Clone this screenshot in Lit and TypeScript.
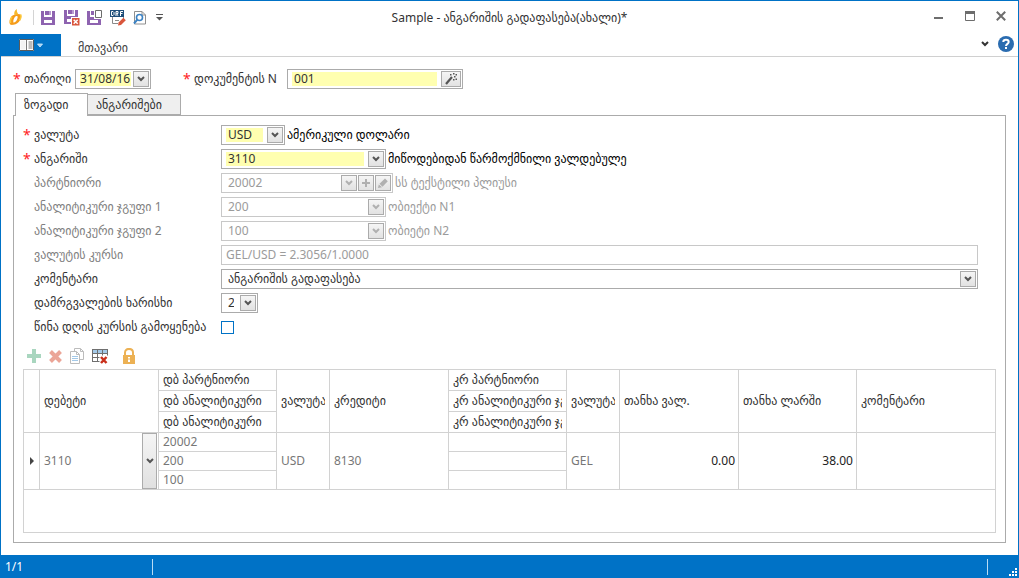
import { LitElement, html, css, svg, nothing } from "lit";
import { customElement, property } from "lit/decorators.js";

const chevron = html`<svg class="chev" width="8" height="6" viewBox="0 0 8 6" aria-hidden="true">
  <path d="M1 1l3 3 3-3" fill="none" stroke="currentColor" stroke-width="2" />
</svg>`;

const floppyBody = svg`<path d="M0 0h3v6h8V0h3v14H0z" fill="#8e63b0"/><path d="M4 0h4v4H4z" fill="#8e63b0"/><path d="M8 0h2v4H8z" fill="#b99bd0"/><path d="M3 9h8v3H3z" fill="#fff"/>`;

const icons = {
  logo: html`<svg width="14" height="17" viewBox="0 0 14 17" aria-hidden="true">
    <path d="M3.500 6.500C1.500 8 .3 11 .5 13.500.7 15.800 2 16.200 4.500 15.800 7.500 15.300 9.500 14 11 11.300 12.300 9 12.500 6.800 11.500 5.500 10 4.500 5.500 5 3.500 6.500z" fill="#f59c1a"/>
    <path d="M6.300 7.500C5 9 4 11.500 4.300 13.200 5.200 14 7 12.500 7.800 11 8.600 9.400 8.900 7.800 8.400 7.200 7.800 6.800 6.900 6.900 6.300 7.500z" fill="#fff"/>
    <path d="M3 7.500c-1.500 2-1.800 4.500-1.500 6.500M11.500 5.500c1 1.500.3 4-1 6" fill="none" stroke="#fcc83c" stroke-width="1.500"/>
    <path d="M5.500 6C4.800 3.500 5.500 1.500 7.800 0 7.800 2 8 3.500 9.500 5.500z" fill="#f7b92c"/>
  </svg>`,
  save: html`<svg width="14" height="14" viewBox="0 0 14 14" aria-hidden="true">${floppyBody}</svg>`,
  saveClose: html`<svg width="16" height="16" viewBox="0 0 16 16" aria-hidden="true">
    ${floppyBody}<path d="M7 7h9v9H7z" fill="#fff"/><path d="M8 8h7.500v7.500H8z" fill="#d9563c"/>
    <path d="M9.700 9.700l4 4m0-4l-4 4" stroke="#fff" stroke-width="1.500"/></svg>`,
  saveNew: html`<svg width="16" height="15" viewBox="0 0 16 15" aria-hidden="true">
    <path d="M0 1h3v6h4v2h7v6H0z" fill="#8e63b0"/><path d="M4 1h3v4H4z" fill="#8e63b0"/><path d="M3 10h8v3H3z" fill="#fff"/>
    <path d="M8.500.5h6v7h-6z" fill="#fff" stroke="#6d6d6d"/></svg>`,
  draft: html`<svg width="16" height="16" viewBox="0 0 16 16" aria-hidden="true">
    <path d="M2.500 7v6.500H8M13.500 7v2" fill="none" stroke="#8a8a8a"/>
    <path d="M5 10.500h4" stroke="#8a8a8a"/>
    <path d="M0 0h14v7H0z" fill="#1f4e79"/>
    <path d="M1.500 1.500v4M1.500 1.500h1.500l1 1v2l-1 1H1.500M6 6V1.500h2v2H6.500L8 5.800M10.500 6V1.500h2.500M10.500 3.500h2" fill="none" stroke="#fff"/>
    <path d="M8 15.500l.6-3L13.400 7.800l2.400 2.400L11 15z" fill="#d9563c"/></svg>`,
  preview: html`<svg width="14" height="16" viewBox="0 0 14 16" aria-hidden="true">
    <path d="M1.500 1.500h7.500l3.500 3.500v9h-11z" fill="#fff" stroke="#8f8f8f"/><path d="M9 1.500V5h3.500" fill="none" stroke="#8f8f8f"/>
    <circle cx="6.500" cy="7.500" r="3" fill="#fff" stroke="#3b82c4" stroke-width="1.600"/>
    <path d="M4.300 9.700L1 13.500" stroke="#3b82c4" stroke-width="2"/></svg>`,
  customize: html`<svg width="7" height="7" viewBox="0 0 7 7" aria-hidden="true">
    <path d="M0 .5h7" stroke="#555"/><path d="M0 3h7L3.500 6.500z" fill="#555"/></svg>`,
  menu: html`<svg width="24" height="12" viewBox="0 0 24 12" aria-hidden="true">
    <path d="M0 0h15v12H0z" fill="#fff"/><path d="M1.500 1.500h5v9h-5z" fill="#f3f3f3"/><path d="M7 0h1v12H7z" fill="#7b7b7b"/>
    <path d="M9.500 3h4M9.500 5h4M9.500 7h4M9.500 9h4" stroke="#777"/><path d="M.5.5h14v11H.5z" fill="none" stroke="#5b5b5b"/>
    <path d="M18.500 5h5L21 8z" fill="#9fd0f5" stroke="#d5ecfc" stroke-width=".8"/></svg>`,
  minimize: html`<svg width="10" height="12" viewBox="0 0 10 12" aria-hidden="true"><path d="M0 8h9" stroke="#6d6d6d" stroke-width="2"/></svg>`,
  maximize: html`<svg width="10" height="10" viewBox="0 0 10 10" aria-hidden="true"><path d="M.5.5h9v9h-9z" fill="none" stroke="#6d6d6d"/><path d="M0 0h10v3H0z" fill="#6d6d6d"/></svg>`,
  close: html`<svg width="10" height="10" viewBox="0 0 10 10" aria-hidden="true"><path d="M.8.8l8.400 8.400m0-8.400L.8 9.200" stroke="#6d6d6d" stroke-width="2"/></svg>`,
  help: html`<svg width="16" height="16" viewBox="0 0 16 16" aria-hidden="true">
    <circle cx="8" cy="8" r="8" fill="#2a6cb0"/>
    <path d="M5.300 6C5.300 3 10.700 3 10.700 6 10.700 7.800 8 7.900 8 10" fill="none" stroke="#fff" stroke-width="2"/><path d="M7 11h2v2H7z" fill="#fff"/></svg>`,
  wand: html`<svg width="12" height="12" viewBox="0 0 12 12" aria-hidden="true">
    <path d="M1 11l6-7" stroke="#555" stroke-width="2.200"/>
    <path d="M5 1h1.500v1.500H5zM8 0h1.500v1.500H8zM9 3h1.500v1.500H9zM8 6h1.500v1.500H8zM10.500 5.500H12V7h-1.500zM10.500 1H12v1.500h-1.500z" fill="#555"/></svg>`,
  smallPlus: html`<svg width="8" height="8" viewBox="0 0 8 8" aria-hidden="true"><path d="M0 4h8M4 0v8" stroke="#b0b0b0" stroke-width="2"/></svg>`,
  pencil: html`<svg width="10" height="10" viewBox="0 0 10 10" aria-hidden="true"><path d="M0 10l.8-3.500L4 9.300zM1.500 5.800L7 .5 9.800 3.200 4.500 8.700z" fill="#b0b0b0"/></svg>`,
  add: html`<svg width="14" height="14" viewBox="0 0 14 14" aria-hidden="true"><path d="M5 0h4v5h5v4H9v5H5V9H0V5h5z" fill="#a9d6bf"/></svg>`,
  remove: html`<svg width="13" height="13" viewBox="0 0 13 13" aria-hidden="true"><path d="M1.500 1.500l10 10m0-10l-10 10" stroke="#eba597" stroke-width="4"/></svg>`,
  copy: html`<svg width="14" height="16" viewBox="0 0 14 16" aria-hidden="true">
    <path d="M4.500.5h6l3 3v8h-9z" fill="#fff" stroke="#bcbcbc"/><path d="M10.500.5v3h3" fill="none" stroke="#bcbcbc"/>
    <path d="M.5 3.500h6l3 3v9h-9z" fill="#fff" stroke="#bcbcbc"/><path d="M6.500 3.500v3h3" fill="none" stroke="#bcbcbc"/>
    <path d="M2 8.500h6M2 10.500h6M2 12.500h6" stroke="#a3c9e8"/></svg>`,
  tableDelete: html`<svg width="16" height="15" viewBox="0 0 16 15" aria-hidden="true">
    <path d="M.5.500h15v11H.5z" fill="#fff"/><path d="M1 1h14v4H1z" fill="#a3c9e8"/>
    <path d="M.5 0v12M5.500 0v12M10.500 0v12M15.500 0v8M0 .5h16M0 4.500h16M0 8.500h11M0 12.500h8" stroke="#6f6f6f" fill="none"/>
    <path d="M7.500 6.500H16V15H7.500z" fill="#fff"/><path d="M9 8l5.500 6M14.500 8L9 14" stroke="#c9301c" stroke-width="2.500"/></svg>`,
  lock: html`<svg width="12" height="16" viewBox="0 0 12 16" aria-hidden="true">
    <path d="M2 8V4.500C2-.3 10-.3 10 4.500V8" fill="none" stroke="#ecb154" stroke-width="2"/>
    <path d="M0 7h12v9H0z" fill="#ecb154"/><path d="M5 9h2v1.500H5zM5 11.500h2V14H5z" fill="#fff"/></svg>`,
  grip: html`<svg width="8" height="8" viewBox="0 0 8 8" aria-hidden="true">
    <path d="M6 0h2v2H6zM3 3h2v2H3zM6 3h2v2H6zM0 6h2v2H0zM3 6h2v2H3zM6 6h2v2H6z" fill="#fff"/></svg>`,
};

const shared = css`
  * { box-sizing: border-box; }
  button, input, select { font: inherit; color: inherit; margin: 0; }
  button { padding: 0; border: 0; background: none; display: grid; place-items: center; }
  svg { display: block; }
`;

const fieldStyles = css`
  :host { display: block; min-width: 0; }
  .frame { display: flex; height: 20px; border: 1px solid #ababab; padding: 1px; background: #fff; color: #333; }
  .frame.off { border-color: #c8c8c8; color: #9b9b9b; }
  .ctl {
    flex: 1; min-width: 0; height: 14px; margin: 1px 4px 1px 3px; padding: 0 2px; border: 0; border-radius: 0;
    background: transparent; outline: 0; opacity: 1; line-height: 14px; appearance: none;
  }
  .ctl.tight { padding: 0; margin-right: 2px; }
  .needed { background: #ffffb0; }
  .btn {
    flex: none; width: 16px; height: 16px; display: grid; place-items: center; color: #555;
    border: 1px solid #ababab; background: linear-gradient(#f5f5f5, #e2e2e2);
  }
  .btn + .btn { margin-left: 1px; }
  .btn.wide { width: 20px; }
  .off .btn { color: #b0b0b0; }
`;

@customElement("combo-field")
class ComboField extends LitElement {
  @property() value = "";
  @property() label = "";
  @property({ type: Boolean }) required = false;
  @property({ type: Boolean }) disabled = false;
  @property({ type: Boolean }) actions = false;

  static styles = [shared, fieldStyles];

  render() {
    return html`<div class="frame ${this.disabled ? "off" : ""}">
      <select class="ctl ${this.required ? "needed" : ""}" aria-label=${this.label} ?disabled=${this.disabled}>
        <option>${this.value}</option>
      </select>
      <span class="btn">${chevron}</span>
      ${this.actions
        ? html`<button class="btn" aria-label="+" ?disabled=${this.disabled}>${icons.smallPlus}</button>
            <button class="btn" aria-label="…" ?disabled=${this.disabled}>${icons.pencil}</button>`
        : nothing}
    </div>`;
  }
}

@customElement("entry-field")
class EntryField extends LitElement {
  @property() value = "";
  @property() label = "";
  @property() action = "";
  @property({ type: Boolean }) required = false;
  @property({ type: Boolean }) disabled = false;

  static styles = [shared, fieldStyles];

  render() {
    const wand = this.action === "wand";
    return html`<div class="frame ${this.disabled ? "off" : ""}">
      <input class="ctl ${this.required ? "needed" : ""} ${wand ? "" : "tight"}" type="text"
        aria-label=${this.label} .value=${this.value} ?disabled=${this.disabled} />
      ${this.action
        ? html`<button class="btn ${wand ? "wide" : ""}" aria-label=${this.label}>${wand ? icons.wand : chevron}</button>`
        : nothing}
    </div>`;
  }
}

interface Row { label: string; value: string; size: string; note?: string; required?: boolean; off?: boolean; kind?: string; clip?: boolean }

const rows: Row[] = [
  { label: "ვალუტა", value: "USD", size: "w64", note: "ამერიკული დოლარი", required: true },
  { label: "ანგარიში", value: "3110", size: "w165", note: "მიწოდებიდან წარმოქმნილი ვალდებულება", required: true, clip: true },
  { label: "პარტნიორი", value: "20002", size: "w172", note: "სს ტექსტილი პლიუსი", off: true, kind: "actions" },
  { label: "ანალიტიკური ჯგუფი 1", value: "200", size: "w165", note: "ობიექტი N1", off: true },
  { label: "ანალიტიკური ჯგუფი 2", value: "100", size: "w165", note: "ობიეტი N2", off: true },
  { label: "ვალუტის კურსი", value: "GEL/USD = 2.3056/1.0000", size: "full", off: true, kind: "text" },
  { label: "კომენტარი", value: "ანგარიშის გადაფასება", size: "full" },
  { label: "დამრგვალების ხარისხი", value: "2", size: "w37" },
];

@customElement("app-root")
class AppRoot extends LitElement {
  static styles = [shared, css`
    :host { display: block; font: 12px/16px "Noto Sans", "DejaVu Sans", sans-serif; color: #333; }
    .window { display: flex; flex-direction: column; min-height: 100vh; border: 1px solid #0072c6; border-bottom: 0; background: #fff; }
    .titlebar { display: grid; grid-template-columns: 1fr auto 1fr; align-items: center; height: 33px; }
    .quick { display: flex; align-items: center; padding-left: 8px; }
    .quick .sep { width: 1px; height: 15px; background: #d4d4d4; margin: 0 7px 0 10px; }
    .quick button { width: 23px; place-items: center start; }
    .title { margin: 0; font-size: 12px; font-weight: 400; white-space: nowrap; }
    .winbtns { display: flex; justify-content: flex-end; align-items: center; align-self: start; gap: 21px; padding-right: 12px; height: 29px; }
    .ribbon { display: flex; align-items: center; height: 23px; border-bottom: 1px solid #d0d0d0; }
    .app-menu { width: 60px; height: 22px; background: #0072c6; }
    .ribbon-tab { margin-left: 17px; padding-top: 5px; color: #444; text-decoration: none; }
    .ribbon-end { margin-left: auto; display: flex; align-items: center; gap: 9px; padding: 0 4px 2px 0; }
    .body { flex: 1; display: flex; flex-direction: column; padding: 12px 12px; }
    .top { display: flex; align-items: center; height: 20px; }
    .top label { margin: 0 4px 0 4px; white-space: nowrap; }
    .top .doc { width: 89px; }
    .star { color: #f22; width: 7px; font-size: 14px; flex: none; }
    .gap { width: 32px; }
    .w37 { width: 37px; } .w64 { width: 64px; } .w76 { width: 76px; } .w165 { width: 165px; } .w172 { width: 172px; } .w176 { width: 176px; }
    .full { flex: 1; }
    .tabs { display: flex; align-items: flex-end; margin-top: 4px; padding-left: 3px; height: 22px; position: relative; z-index: 1; }
    .tab { height: 21px; width: 94px; padding: 0 8px; place-items: center start; border: 1px solid #ababab; background: #efefef; margin-left: -1px; }
    .tab.on { height: 23px; width: 73px; margin: 0 0 -1px -1px; border-bottom: 0; background: #fff; }
    .panel { flex: 1; display: flex; flex-direction: column; border: 1px solid #ababab; padding: 9px; }
    .form { display: grid; gap: 4px; padding-right: 18px; }
    .row { display: flex; align-items: center; height: 20px; white-space: nowrap; }
    .row label { width: 187px; flex: none; }
    .row .star { width: 11px; }
    .row.off { color: #808080; }
    .note { padding-left: 2px; color: #000; }
    .note.clip { width: 241px; overflow: hidden; }
    .off .note { color: #9b9b9b; }
    .check { appearance: none; width: 13px; height: 13px; border: 1px solid #0072c6; background: #fff; }
    .tools { display: flex; align-items: center; gap: 8px; height: 16px; margin: 11px 0 5px; padding-left: 4px; }
    .tools .last { margin-left: 7px; }
    .grid { flex: 1; min-height: 163px; border: 1px solid #d2d2d2; }
    table { width: 100%; table-layout: fixed; border-collapse: separate; border-spacing: 0; }
    th, td { padding: 0 4px; font-weight: 400; text-align: left; border-right: 1px solid #d2d2d2; border-bottom: 1px solid #d2d2d2; white-space: nowrap; overflow: hidden; line-height: 16px; }
    th { height: 21px; }
    td { height: 19px; color: #777; }
    th > div { overflow: hidden; }
    .end { border-right: 0; }
    td.num { text-align: right; color: #222; padding-right: 3px; }
    td.drop { padding: 0 0 0 4px; }
    .edit { display: flex; align-items: center; justify-content: space-between; height: 56px; }
    .drop-btn { width: 15px; height: 56px; margin-right: 1px; border: 1px solid #ababab; background: linear-gradient(#f5f5f5, #e0e0e0); color: #555; }
    .c16 { width: 16px; } .c119 { width: 119px; } .c118 { width: 118px; } .c53 { width: 53px; }
    .mark { padding: 0 0 0 6px; }
    .status { display: flex; align-items: center; height: 23px; background: #0072c6; color: #fff; padding-left: 4px; }
    .status .count { width: 147px; }
    .status .sep { width: 1px; height: 16px; background: #b9dcf5; }
    .status .fill { flex: 1; }
    .status .grip { width: 30px; display: flex; justify-content: flex-end; align-self: flex-end; padding: 0 1px 2px 0; }
  `];

  private row(r: Row) {
    return html`<div class="row ${r.off ? "off" : ""}">
      <span class="star">${r.required ? "*" : nothing}</span>
      <label>${r.label}</label>
      ${r.kind === "text"
        ? html`<entry-field class=${r.size} label=${r.label} value=${r.value} disabled></entry-field>`
        : html`<combo-field class=${r.size} label=${r.label} value=${r.value} ?required=${!!r.required}
            ?disabled=${!!r.off} ?actions=${r.kind === "actions"}></combo-field>`}
      ${r.note ? html`<span class="note ${r.clip ? "clip" : ""}">${r.note}</span>` : nothing}
    </div>`;
  }

  render() {
    return html`<div class="window">
      <header class="titlebar">
        <div class="quick">
          ${icons.logo}<span class="sep"></span>
          <button aria-label="save">${icons.save}</button>
          <button aria-label="save and close">${icons.saveClose}</button>
          <button aria-label="save and new">${icons.saveNew}</button>
          <button aria-label="draft">${icons.draft}</button>
          <button aria-label="preview">${icons.preview}</button>
          <button aria-label="customize">${icons.customize}</button>
        </div>
        <h1 class="title">Sample - ანგარიშის გადაფასება(ახალი)*</h1>
        <div class="winbtns">
          <button aria-label="minimize">${icons.minimize}</button>
          <button aria-label="maximize">${icons.maximize}</button>
          <button aria-label="close">${icons.close}</button>
        </div>
      </header>
      <nav class="ribbon">
        <button class="app-menu" aria-label="menu">${icons.menu}</button>
        <a class="ribbon-tab" href="#">მთავარი</a>
        <div class="ribbon-end">
          <button aria-label="collapse">${chevron}</button>
          <button aria-label="help">${icons.help}</button>
        </div>
      </nav>
      <main class="body">
        <div class="top">
          <span class="star">*</span><label>თარიღი</label>
          <entry-field class="w76" label="თარიღი" value="31/08/16" action="date" required></entry-field>
          <span class="gap"></span>
          <span class="star">*</span><label class="doc">დოკუმენტის N</label>
          <entry-field class="w176" label="დოკუმენტის N" value="001" action="wand" required></entry-field>
        </div>
        <div class="tabs" role="tablist">
          <button class="tab on" role="tab" aria-selected="true">ზოგადი</button>
          <button class="tab" role="tab" aria-selected="false">ანგარიშები</button>
        </div>
        <section class="panel">
          <div class="form">
            ${rows.map((r) => this.row(r))}
            <div class="row">
              <span class="star"></span><label for="prev">წინა დღის კურსის გამოყენება</label>
              <input class="check" id="prev" type="checkbox" />
            </div>
          </div>
          <div class="tools">
            <button aria-label="add" disabled>${icons.add}</button>
            <button aria-label="remove" disabled>${icons.remove}</button>
            <button aria-label="copy" disabled>${icons.copy}</button>
            <button aria-label="clear table">${icons.tableDelete}</button>
            <button class="last" aria-label="lock">${icons.lock}</button>
          </div>
          <div class="grid">
            <table>
              <colgroup>
                <col class="c16" /><col class="c119" /><col class="c118" /><col class="c53" /><col class="c119" />
                <col class="c118" /><col class="c53" /><col class="c119" /><col class="c118" /><col />
              </colgroup>
              <thead>
                <tr>
                  <th rowspan="3"></th><th rowspan="3">დებეტი</th><th><div>დბ პარტნიორი</div></th>
                  <th rowspan="3"><div>ვალუტა</div></th><th rowspan="3">კრედიტი</th><th><div>კრ პარტნიორი</div></th>
                  <th rowspan="3"><div>ვალუტა</div></th><th rowspan="3">თანხა ვალ.</th>
                  <th rowspan="3">თანხა ლარში</th><th rowspan="3" class="end">კომენტარი</th>
                </tr>
                <tr><th><div>დბ ანალიტიკური</div></th><th><div>კრ ანალიტიკური ჯგუფი 1</div></th></tr>
                <tr><th><div>დბ ანალიტიკური</div></th><th><div>კრ ანალიტიკური ჯგუფი 2</div></th></tr>
              </thead>
              <tbody>
                <tr>
                  <td rowspan="3" class="mark"><svg width="4" height="8" viewBox="0 0 4 8" aria-hidden="true"><path d="M0 0l4 4-4 4z" fill="#444"/></svg></td>
                  <td rowspan="3" class="drop"><div class="edit"><span>3110</span><button class="drop-btn" aria-label="დებეტი">${chevron}</button></div></td>
                  <td>20002</td><td rowspan="3">USD</td><td rowspan="3">8130</td><td></td>
                  <td rowspan="3">GEL</td><td rowspan="3" class="num">0.00</td><td rowspan="3" class="num">38.00</td><td rowspan="3" class="end"></td>
                </tr>
                <tr><td>200</td><td></td></tr>
                <tr><td>100</td><td></td></tr>
              </tbody>
            </table>
          </div>
        </section>
      </main>
      <footer class="status">
        <span class="count">1/1</span><span class="sep"></span><span class="fill"></span><span class="sep"></span>
        <span class="grip">${icons.grip}</span>
      </footer>
    </div>`;
  }
}
